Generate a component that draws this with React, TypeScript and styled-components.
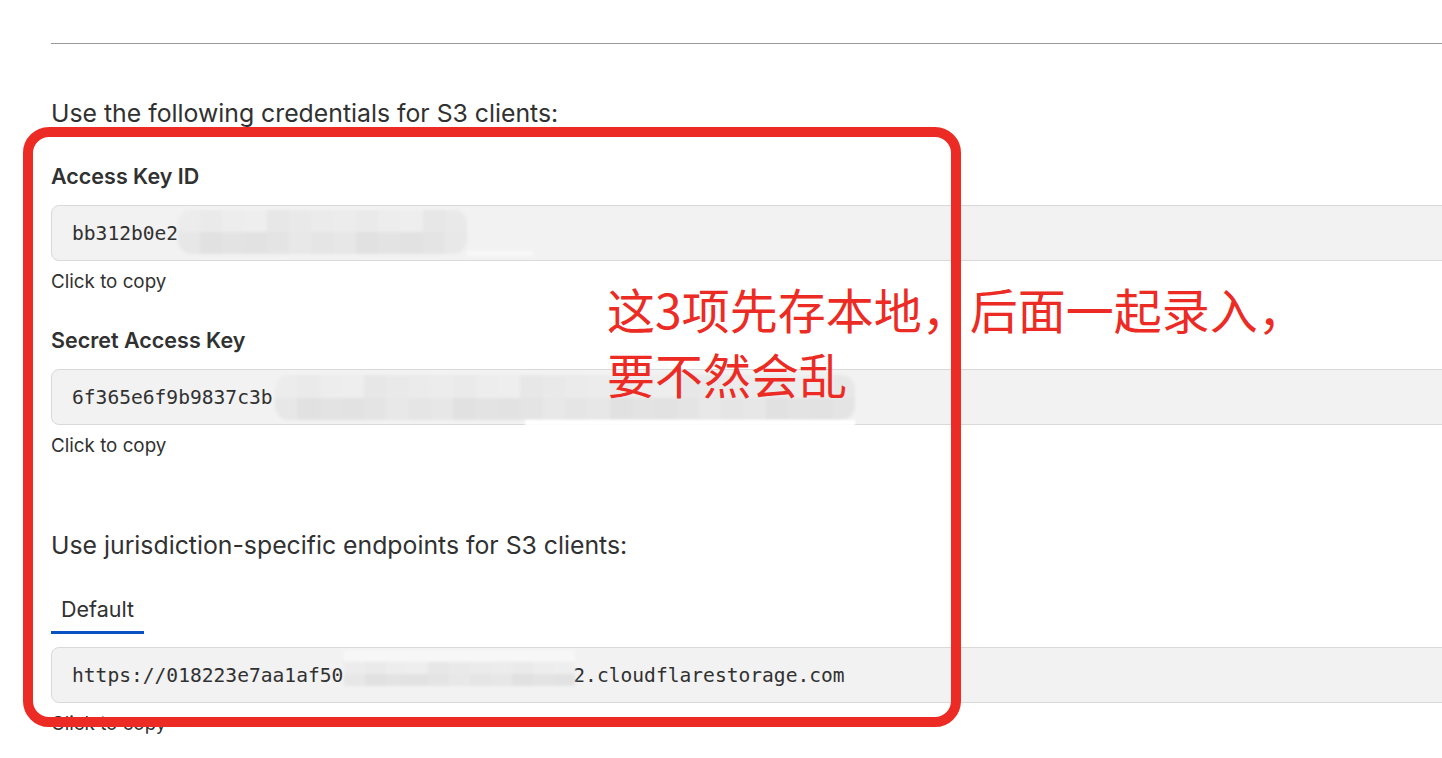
import React from 'react'
import styled, { createGlobalStyle } from 'styled-components'

const GlobalStyle = createGlobalStyle`
  html, body {
    margin: 0;
    padding: 0;
    background: #fff;
    overflow: hidden;
  }
  body {
    font-family: Inter, "Noto Sans", "Liberation Sans", sans-serif;
    color: #313131;
  }
`

const Page = styled.div`
  position: relative;
  display: flow-root;
  width: 100%;
  height: 758px;
  padding-left: 51px;
  box-sizing: border-box;
`

const Rule = styled.hr`
  margin: 43px 0 0;
  border: 0;
  border-top: 1px solid #9a9a9a;
`

const SectionTitle = styled.h2<{ $gap: number }>`
  margin: ${(p) => p.$gap}px 0 0;
  font-size: 24.8px;
  line-height: 32px;
  font-weight: 400;
  color: #313131;
`

const Field = styled.div<{ $gap: number }>`
  margin-top: ${(p) => p.$gap}px;
  display: flex;
  flex-direction: column;
  align-items: flex-start;
`

const FieldLabel = styled.label`
  font-size: 21.5px;
  line-height: 28px;
  font-weight: 600;
  color: #313131;
  margin-bottom: 15px;
`

const CopyBox = styled.div`
  position: relative;
  box-sizing: border-box;
  width: 1440px;
  height: 56px;
  display: flex;
  align-items: center;
  padding-left: 20px;
  background: #f2f2f2;
  border: 1px solid #d9d9d9;
  border-radius: 8px;
  font-family: "DejaVu Sans Mono", "Liberation Mono", monospace;
  font-size: 19.6px;
  color: #313131;
  cursor: pointer;
`

const Hint = styled.span`
  margin-top: 9px;
  font-size: 18.8px;
  line-height: 24px;
  color: #313131;
`

const Tabs = styled.div`
  margin-top: 34px;
  display: flex;
`

const Tab = styled.button<{ $active?: boolean }>`
  border: 0;
  background: none;
  padding: 0 10px 8px;
  font-family: inherit;
  font-size: 21.5px;
  line-height: 28px;
  color: #313131;
  border-bottom: 3px solid ${(p) => (p.$active ? '#0a51c1' : 'transparent')};
`

const TabPanel = styled.div`
  margin-top: 13px;
  display: flex;
  flex-direction: column;
  align-items: flex-start;
`

/* pixelated redaction laid over the copied values */
const Redacted = styled.div<{ $left: number; $top: number; $width: number; $height: number; $round: number }>`
  position: absolute;
  left: ${(p) => p.$left}px;
  top: ${(p) => p.$top}px;
  width: ${(p) => p.$width}px;
  height: ${(p) => p.$height}px;
  display: grid;
  grid-auto-flow: column;
  grid-template-rows: 1fr 1fr;
  border-radius: ${(p) => p.$round}px;
  overflow: hidden;
  filter: blur(1.4px);
`

const Cell = styled.div<{ $shade: string }>`
  background: ${(p) => p.$shade};
`

const Strip = styled.div<{ $left: number; $top: number; $width: number; $height: number; $color: string }>`
  position: absolute;
  left: ${(p) => p.$left}px;
  top: ${(p) => p.$top}px;
  width: ${(p) => p.$width}px;
  height: ${(p) => p.$height}px;
  background: ${(p) => p.$color};
  filter: blur(1px);
`

const Highlight = styled.div`
  position: absolute;
  left: 23px;
  top: 127px;
  width: 938px;
  height: 600px;
  box-sizing: border-box;
  border: 10px solid #ec2b24;
  border-radius: 26px;
  pointer-events: none;
`

const Note = styled.div`
  position: absolute;
  left: 607px;
  top: 276px;
  font-family: "Noto Sans CJK SC", "Noto Sans", sans-serif;
  font-size: 48px;
  line-height: 65px;
  font-weight: 400;
  color: #ec2b24;
  white-space: nowrap;
`

const topShades = ['#ececec', '#e9e9e9', '#eeeeee', '#eaeaea', '#ebebeb', '#e7e7e7', '#ededed']
const bottomShades = ['#e4e4e4', '#e7e7e7', '#e2e2e2', '#e5e5e5', '#e3e3e3', '#e8e8e8', '#e1e1e1']

type BlurProps = { left: number; top: number; width: number; height: number; round?: number }

const Blur = ({ left, top, width, height, round = 4 }: BlurProps) => {
  const cols = Math.max(2, Math.round(width / 22))
  const cells: React.ReactNode[] = []
  for (let c = 0; c < cols; c++) {
    cells.push(<Cell key={`t${c}`} $shade={topShades[(c * 3) % topShades.length]} />)
    cells.push(<Cell key={`b${c}`} $shade={bottomShades[(c * 5 + 1) % bottomShades.length]} />)
  }
  return (
    <Redacted $left={left} $top={top} $width={width} $height={height} $round={round}>
      {cells}
    </Redacted>
  )
}

const App = () => {
  return (
    <>
      <GlobalStyle />
      <Page>
        <Rule />
        <SectionTitle $gap={53}>Use the following credentials for S3 clients:</SectionTitle>

        <Field $gap={33}>
          <FieldLabel>Access Key ID</FieldLabel>
          <CopyBox>
            bb312b0e2
            <Blur left={126} top={4} width={289} height={44} round={14} />
            <Strip $left={415} $top={45} $width={66} $height={5} $color="#f8f8f8" />
          </CopyBox>
          <Hint>Click to copy</Hint>
        </Field>

        <Field $gap={32}>
          <FieldLabel>Secret Access Key</FieldLabel>
          <CopyBox>
            6f365e6f9b9837c3b
            <Blur left={223} top={5} width={580} height={45} round={14} />
            <Strip $left={473} $top={50} $width={330} $height={6} $color="#ffffff" />
          </CopyBox>
          <Hint>Click to copy</Hint>
        </Field>

        <SectionTitle $gap={71}>Use jurisdiction-specific endpoints for S3 clients:</SectionTitle>

        <Tabs>
          <Tab $active>Default</Tab>
        </Tabs>
        <TabPanel>
          <CopyBox>
            https://018223e7aa1af50
            <Strip $left={292} $top={2} $width={231} $height={12} $color="#f7f7f7" />
            <Blur left={292} top={14} width={231} height={24} round={2} />
            <span style={{ marginLeft: 230 }}>2.cloudflarestorage.com</span>
          </CopyBox>
          <Hint>Click to copy</Hint>
        </TabPanel>

        <Highlight />
        <Note>
          <div>这3项先存本地，后面一起录入，</div>
          <div>要不然会乱</div>
        </Note>
      </Page>
    </>
  )
}

export default App
